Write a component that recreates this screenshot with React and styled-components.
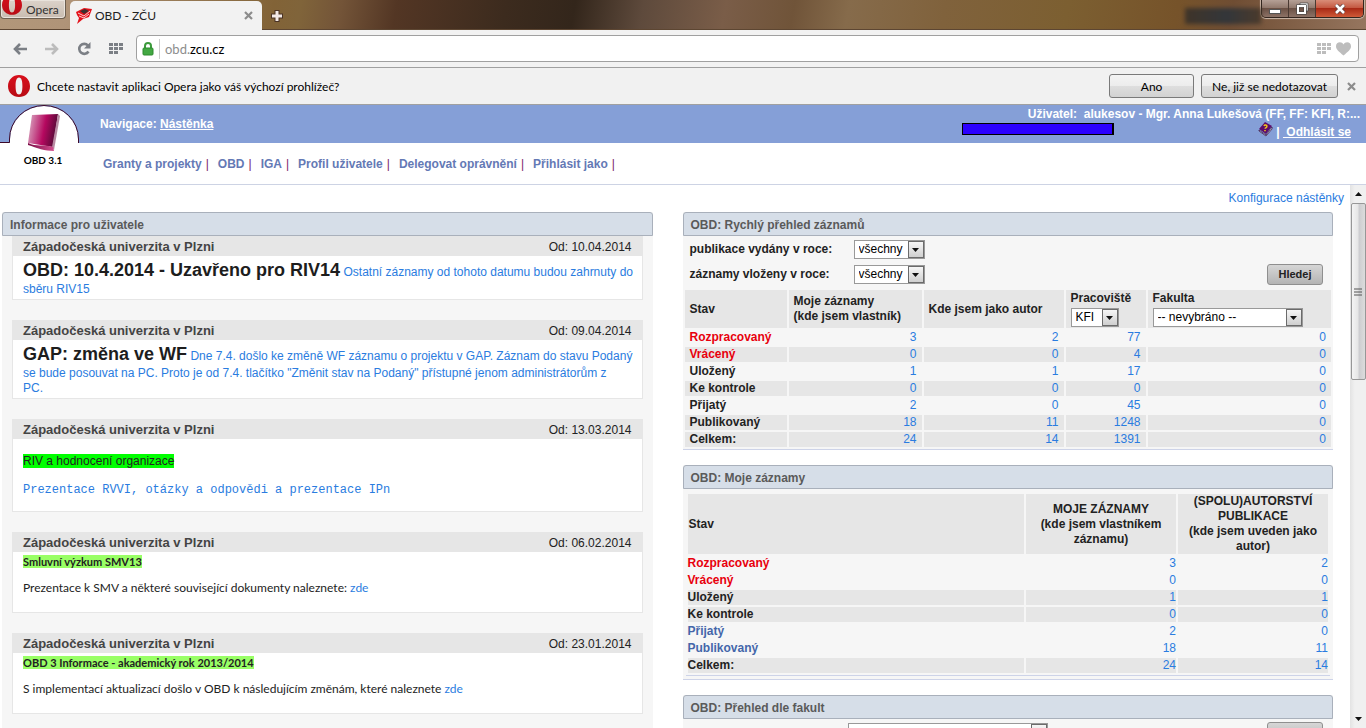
import React from "react";
import styled, { createGlobalStyle, css } from "styled-components";

const uiFont = `Lato, "Open Sans", sans-serif`;
const pageFont = `"Liberation Sans", Arial, sans-serif`;

const GlobalStyle = createGlobalStyle`
  * {
    box-sizing: border-box;
  }

  body {
    margin: 0;
    background: #fff;
    color: #222;
    font-family: ${pageFont};
    font-size: 12px;
    line-height: 15px;
  }

  button,
  select,
  input {
    font: inherit;
    color: inherit;
    margin: 0;
  }
`;

const Window = styled.div`
  height: 100vh;
  display: flex;
  flex-direction: column;
  overflow: hidden;
`;

/* ---------- browser ---------- */

const TitleBar = styled.div`
  flex: none;
  height: 30px;
  display: flex;
  align-items: flex-start;
  border-bottom: 1px solid #5d4632;
  font-family: ${uiFont};
  background: linear-gradient(
    100deg,
    #b2977a 0%,
    #b09478 5%,
    #826337 20%,
    #80643a 22%,
    #735438 25%,
    #533624 29%,
    #3c2b1e 37%,
    #33261b 42%,
    #5e4a3c 47%,
    #7a5d48 53%,
    #705439 58%,
    #866b4b 62%,
    #80623c 69%,
    #7c5f31 78%,
    #76532a 86%,
    #6f4d33 90%,
    #96765f 100%
  );
`;

const OperaMenu = styled.button`
  height: 19px;
  width: 66px;
  display: flex;
  align-items: flex-start;
  gap: 4px;
  padding: 0 0 0 1px;
  overflow: hidden;
  border: 1px solid #6d5f50;
  border-top: 0;
  border-radius: 0 0 4px 4px;
  background: linear-gradient(#dcd3ca, #c8bcb0);
  box-shadow: inset 0 0 0 1px #e9e3dc;
  color: #333;

  span {
    padding-top: 2px;
  }
`;

const Tab = styled.div`
  height: 29px;
  width: 192px;
  margin: 1px 0 0 4px;
  padding: 0 9px 0 6px;
  display: flex;
  align-items: center;
  gap: 3px;
  border-radius: 5px 5px 0 0;
  background: #f2f2f2;
  color: #222;

  span {
    flex: 1;
  }
`;

const BareButton = styled.button`
  display: flex;
  align-items: center;
  justify-content: center;
  padding: 0;
  border: 0;
  background: none;
`;

const NewTab = styled(BareButton)`
  margin: 10px auto 0 9px;
`;

/* strip of the desktop that shows through the glass frame */
const Shade = styled.div`
  width: 76px;
  height: 16px;
  margin-top: 8px;
  background: linear-gradient(90deg, #3f3429, #33363a 55%, #4a3a2c);
  filter: blur(2px);
`;

const WindowButtons = styled.div`
  display: flex;
  margin-right: 2px;
  height: 18px;
  border: 1px solid #33261f;
  border-top: 0;
  border-radius: 0 0 5px 5px;
  overflow: hidden;
  box-shadow: 0 0 1px 1px #cdb9aa;
`;

const WindowButton = styled.button`
  width: ${p => (p.$close ? 47 : 27)}px;
  display: flex;
  align-items: center;
  justify-content: center;
  padding: 0;
  border: 0;
  border-right: ${p => (p.$close ? "0" : "1px solid #4a3a32")};
  background: ${p =>
    p.$close
      ? "linear-gradient(#d98d78, #c45942 45%, #a92a16 50%, #cf5a38)"
      : "linear-gradient(#b5a096, #927a6e 45%, #6b5145 50%, #8c7266)"};
`;

const Toolbar = styled.div`
  flex: none;
  height: 38px;
  display: flex;
  align-items: center;
  gap: 8px;
  padding: 0 7px 0 8px;
  background: #f2f2f2;
  border-bottom: 1px solid #a0a0a0;
`;

const ToolButton = styled(BareButton)`
  width: 24px;
  height: 24px;
`;

const AddressBar = styled.div`
  flex: 1;
  height: 27px;
  display: flex;
  align-items: center;
  padding: 0 7px 0 5px;
  border: 1px solid #a0a0a0;
  border-radius: 4px;
  background: #fff;
  font: 13px/20px ${uiFont};
`;

const Host = styled.span`
  flex: 1;
  margin-left: 5px;
  padding-left: 5px;
  border-left: 1px solid #ccc;
  color: #000;

  i {
    font-style: normal;
    color: #8d8d8d;
  }
`;

const InfoBar = styled.div`
  flex: none;
  height: 37px;
  display: flex;
  align-items: center;
  gap: 7px;
  padding: 0 10px 0 8px;
  background: #f1f1f1;
  border-bottom: 1px solid #a0a0a0;
  font-family: ${uiFont};
  color: #000;

  p {
    flex: 1;
    margin: 0;
  }
`;

const InfoButton = styled.button`
  height: 24px;
  min-width: 85px;
  padding: 0 10px;
  border: 1px solid #7a7a7a;
  border-radius: 3px;
  background: linear-gradient(#f4f4f4, #ececec 50%, #dedede 50%, #d2d2d2);
  color: #000;
`;

const CloseInfo = styled(BareButton)`
  margin-left: 2px;
`;

/* ---------- page header ---------- */

const Header = styled.header`
  flex: none;
  display: grid;
  grid-template-columns: 100px 1fr;
  grid-template-rows: 38px 41px;
  border-bottom: 1px solid #cdd3e4;
`;

const LogoArea = styled.div`
  grid-column: 1;
  grid-row: 1 / 3;
  z-index: 1;
`;

const TopStrip = styled.div`
  grid-column: 1 / 3;
  grid-row: 1;
  display: flex;
  justify-content: space-between;
  padding: 2px 6px 0 100px;
  background: #859fd7;
  color: #fff;
  font-weight: bold;

  a {
    color: #fff;
  }
`;

const Path = styled.div`
  padding-top: 10px;
`;

const User = styled.div`
  width: 398px;
`;

const UserName = styled.div`
  text-align: right;
  white-space: pre;
`;

const UserTools = styled.div`
  display: flex;
  align-items: flex-start;
  gap: 3px;
  padding-right: 9px;

  span {
    padding-top: 3px;
    white-space: pre;
  }
`;

const Masked = styled.div`
  width: 152px;
  height: 12px;
  margin: 1px auto 0 0;
  border: 1px solid #000;
  border-right-width: 2px;
  background: #2b00ff;
`;

const Menu = styled.nav`
  grid-column: 2;
  grid-row: 2;
  display: flex;
  padding: 14px 0 0 3px;
  font-weight: bold;

  a {
    color: #6479b5;
    text-decoration: none;
  }

  a::after {
    content: "|";
    margin: 0 9px 0 4px;
    color: #7a1a6e;
    font-weight: normal;
  }
`;

/* ---------- dashboard ---------- */

const Viewport = styled.div`
  flex: 1;
  min-height: 0;
  display: flex;
`;

const Dashboard = styled.main`
  flex: 1;
  min-width: 0;
  overflow: hidden;
  padding: 6px 17px 0 2px;
`;

const Config = styled.div`
  margin: 0 -11px 6px 0;
  text-align: right;
`;

const Link = styled.a`
  color: #2a7ce0;
  text-decoration: none;
`;

const Columns = styled.div`
  display: grid;
  grid-template-columns: 1fr 1fr;
  gap: 30px;
  align-items: start;
`;

const Panel = styled.section`
  background: #f6f6f6;
  margin-bottom: 15px;
`;

const PanelTitle = styled.h2`
  margin: 0;
  height: 24px;
  padding: 5px 7px 0;
  border: 1px solid #a9b0bb;
  border-radius: 3px 3px 0 0;
  background: #d6dee8;
  color: #5a5a5a;
  font-size: 12px;
  line-height: 15px;
`;

const Notices = styled.div`
  display: grid;
  gap: 20px;
  padding: 0 10px 20px;
`;

const NoticeHead = styled.header`
  display: flex;
  justify-content: space-between;
  height: 20px;
  padding: 3px 11px 0;
  background: #e6e6e6;

  h3 {
    margin: 0;
    color: #444;
    font-size: 13px;
    line-height: 16px;
  }

  time {
    line-height: 17px;
  }
`;

const NoticeBody = styled.div`
  padding: ${p => p.$pad || "3px 3px 2px 10px"};
  border: 1px solid #e6e6e6;
  border-top: 0;
  background: #fff;

  p {
    margin: 0 0 ${p => p.$gap || 0}px;
  }

  p:last-child {
    margin: 0;
  }
`;

const Headline = styled.b`
  color: #1d1d1d;
  font-size: 18px;
  line-height: 23px;
`;

const Mark = styled.mark`
  background: ${p => p.$color};
  color: #222;
`;

const Small = styled.div`
  font-family: ${uiFont};

  mark {
    font-size: 11px;
    font-weight: bold;
  }
`;

const Mono = styled.p`
  font-family: "Liberation Mono", monospace;
`;

const Filters = styled.div`
  display: grid;
  grid-template-columns: 164px 1fr auto;
  row-gap: 5px;
  align-items: center;
  padding: 4px 10px 3px 7px;

  label {
    font-weight: bold;
  }
`;

const SearchButton = styled.button`
  grid-column: 3;
  height: 21px;
  width: 56px;
  padding: 0;
  border: 1px solid #8f8f8f;
  border-radius: 3px;
  background: linear-gradient(#d6d6d6, #b4b4b4);
  font-size: 11px;
  font-weight: bold;
`;

const SelectBox = styled.span`
  display: inline-grid;
  grid-template-columns: 1fr 16px;
  vertical-align: top;
  width: ${p => p.$width}px;
  height: 19px;
  border: 1px solid #999;
  background: #fff;

  select {
    grid-area: 1 / 1 / 2 / 3;
    appearance: none;
    width: 100%;
    height: 17px;
    padding: 0 0 0 4px;
    border: 0;
    border-radius: 0;
    background: none;
    color: #000;
    font-size: 12px;
    font-weight: normal;
    line-height: 17px;
  }
`;

const Arrow = styled.span`
  grid-area: 1 / 2;
  pointer-events: none;
  display: flex;
  align-items: center;
  justify-content: center;
  border: 1px solid #6b6b6b;
  background: linear-gradient(#f6f6f6, #cfcfcf);
`;

const Table = styled.table`
  width: 100%;
  table-layout: fixed;
  border-collapse: separate;
  border-spacing: 2px;
  border-bottom: 1px solid #cdd3e8;

  th,
  td {
    height: 15px;
    padding: 0 ${p => p.$pad}px;
    line-height: 15px;
    text-align: right;
  }

  tbody th {
    text-align: left;
  }
`;

const Col = styled.col`
  width: ${p => p.$width}px;
`;

const HeadCell = styled.th`
  && {
    height: ${p => p.$height}px;
    padding: 0 ${p => p.$pad}px;
    background: #e6e6e6;
    text-align: ${p => p.$align || "left"};
  }
`;

const FieldLabel = styled.label`
  display: block;
  margin-bottom: 2px;
`;

const Row = styled.tr`
  ${p =>
    p.$dark &&
    css`
      th,
      td {
        background: #e6e6e6;
      }
    `}

  th {
    color: ${p => p.$color || "#222"};
  }
`;

const TableInset = styled.div`
  padding: 3px;
  border-bottom: 1px solid #cdd3e8;
`;

const FacultyFilters = styled(Filters)`
  grid-template-columns: 158px 1fr auto;
  padding-top: 3px;
`;

/* ---------- scrollbar ---------- */

const Scrollbar = styled.div`
  flex: none;
  width: 16px;
  display: flex;
  flex-direction: column;
  align-items: center;
  background: linear-gradient(90deg, #e3e3e3, #f0f0f0 30%, #f0f0f0);
`;

const ScrollArrow = styled(BareButton)`
  height: 18px;
  width: 16px;
`;

const Thumb = styled.div`
  width: 15px;
  height: 177px;
  display: flex;
  align-items: center;
  justify-content: center;
  border: 1px solid #979797;
  border-radius: 2px;
  background: linear-gradient(90deg, #f4f4f4, #e6e6e6 45%, #cdcdd0 55%, #dcdcdc);
`;

const Track = styled.div`
  flex: 1;
`;

/* ---------- drawings ---------- */

const OperaO = ({ size, id, cut = 0 }) => (
  <svg
    width={size}
    height={Math.round((size * (22 - cut)) / 22)}
    viewBox={`0 ${cut} 22 ${22 - cut}`}
  >
    <defs>
      <linearGradient id={id} x1="0" y1="0" x2="0" y2="1">
        <stop offset="0" stopColor="#d8101c" />
        <stop offset="1" stopColor="#b80c14" />
      </linearGradient>
    </defs>
    <path
      fill={`url(#${id})`}
      fillRule="evenodd"
      d="M11 0C17 0 22 4.5 22 11.200S17 22 11 22 0 17.700 0 11.200 5 0 11 0zM11 2.500C8.500 2.500 7.600 6 7.600 11s.9 8.500 3.400 8.500 3.400-3.500 3.400-8.500-.9-8.500-3.400-8.500z"
    />
  </svg>
);

const Cross = ({ color = "#8c8c8c" }) => (
  <svg width="9" height="9" viewBox="0 0 9 9">
    <path d="M1 1l7 7M8 1L1 8" stroke={color} strokeWidth="2.200" />
  </svg>
);

const Favicon = () => (
  <svg width="16" height="16" viewBox="0 0 16 16">
    <path d="M0 4l8-4 8 1-3 8-6 2-6 5 2-6-2-3z" fill="#e5121b" />
    <path d="M4 3l5-2 4 2-5 3z" fill="#3d3030" />
    <path d="M2 5l6 3 6-5M3 8l5 2 5-4" fill="none" stroke="#fff" strokeWidth="0.800" />
  </svg>
);

const BackArrow = ({ color, flip }) => (
  <svg width="14" height="12" viewBox="0 0 14 12">
    <path
      transform={flip ? "matrix(-1 0 0 1 14 0)" : undefined}
      d="M14 6H2M7 1L2 6l5 5"
      fill="none"
      stroke={color}
      strokeWidth="2.600"
    />
  </svg>
);

const Reload = () => (
  <svg width="14" height="14" viewBox="0 0 14 14">
    <path d="M11.500 9.500A5 5 0 1 1 11 3.500" fill="none" stroke="#7b7f85" strokeWidth="2.600" />
    <path d="M13.500 0v6.500H7z" fill="#7b7f85" />
  </svg>
);

const Tiles = ({ color }) => (
  <svg width="15" height="12" viewBox="0 0 15 12" fill={color}>
    {[0, 4, 8].map(y =>
      [0, 5, 10].map(x =>
        x === 10 && y === 8 ? null : (
          <rect key={`${x}-${y}`} x={x} y={y} width="4" height="3" />
        )
      )
    )}
  </svg>
);

const Lock = () => (
  <svg width="12" height="14" viewBox="0 0 12 14">
    <path d="M3 7V4a3 3 0 0 1 6 0v3" fill="none" stroke="#3c9a3c" strokeWidth="2" />
    <rect x="1" y="6" width="10" height="7" rx="1" fill="#43a843" stroke="#2f8a2f" />
  </svg>
);

const Heart = () => (
  <svg width="15" height="14" viewBox="0 0 15 14">
    <path
      d="M7.500 13.500C3 9.500 0 7.500 0 4.200 0 1.800 1.700.3 3.900.3c1.500 0 2.800.8 3.600 2.100C8.300 1.100 9.600.3 11.100.3c2.200 0 3.900 1.500 3.900 3.900 0 3.300-3 5.300-7.500 9.300z"
      fill="#bdbdbd"
    />
  </svg>
);

const Book = () => (
  <svg width="15" height="15" viewBox="0 0 15 15">
    <path d="M7 0l7 4-6 8-7-5z" fill="#5d0d6b" />
    <path d="M1 8l7 5 6-8v2l-6 7-7-5z" fill="#fff" stroke="#2c0638" strokeWidth="0.700" />
    <path
      d="M6 4c.6-1.500 3.200-1.100 2.900.6-.2 1-1.700.9-1.800 2.200M7 8v1.300"
      fill="none"
      stroke="#f5c71a"
      strokeWidth="1.500"
    />
  </svg>
);

const Down = ({ up }) => (
  <svg width="7" height="4" viewBox="0 0 7 4">
    <path d={up ? "M0 4h7L3.500 0z" : "M0 0h7L3.500 4z"} fill="#111" />
  </svg>
);

const Logo = () => (
  <svg width="84" height="64" viewBox="0 0 84 64" role="img" aria-label="OBD 3.1">
    <defs>
      <linearGradient id="cover" x1="0" y1="0.300" x2="1" y2="0.500">
        <stop offset="0" stopColor="#d9a3bf" />
        <stop offset="0.550" stopColor="#b5085f" />
        <stop offset="1" stopColor="#4c0b33" />
      </linearGradient>
      <linearGradient id="pages" x1="0" y1="0" x2="1" y2="0">
        <stop offset="0" stopColor="#7a0c45" />
        <stop offset="1" stopColor="#d34c8e" />
      </linearGradient>
    </defs>
    <path d="M10 38V34A34 33 0 0 1 78 34V38V62H10z" fill="#fff" />
    <path d="M0 37.500H9.500V34A34.500 33.500 0 0 1 78.500 34V38" fill="none" stroke="#3d0828" />
    <path d="M32 10l26-1-5 33-25-4z" fill="url(#cover)" />
    <path d="M58 9l2 2-6 34-2-3z" fill="#b98aa2" />
    <path d="M28 38c8 4 17 1 25 4l1 4c-9 0-17-3-26-6z" fill="url(#pages)" />
    <text
      x="43"
      y="59"
      textAnchor="middle"
      fontFamily="Lato, sans-serif"
      fontSize="10"
      fontWeight="bold"
      fill="#000"
    >
      OBD 3.1
    </text>
  </svg>
);

/* ---------- parts ---------- */

function Select({ id, width, value, label }) {
  return (
    <SelectBox $width={width}>
      <select id={id} aria-label={label} defaultValue={value}>
        <option>{value}</option>
      </select>
      <Arrow>
        <Down />
      </Arrow>
    </SelectBox>
  );
}

function Notice({ date, pad, gap, children }) {
  return (
    <article>
      <NoticeHead>
        <h3>Západočeská univerzita v Plzni</h3>
        <time>Od: {date}</time>
      </NoticeHead>
      <NoticeBody $pad={pad} $gap={gap}>
        {children}
      </NoticeBody>
    </article>
  );
}

function DataRows({ rows }) {
  return (
    <tbody>
      {rows.map(row => (
        <Row key={row.name} $dark={row.dark} $color={row.color}>
          <th scope="row">{row.name}</th>
          {row.values.map((value, i) => (
            <td key={i}>
              <Link href="#">{value}</Link>
            </td>
          ))}
        </Row>
      ))}
    </tbody>
  );
}

const menuItems = [
  "Granty a projekty",
  "OBD",
  "IGA",
  "Profil uživatele",
  "Delegovat oprávnění",
  "Přihlásit jako"
];

const overviewRows = [
  { name: "Rozpracovaný", values: [3, 2, 77, 0], color: "#e8000d" },
  { name: "Vrácený", values: [0, 0, 4, 0], color: "#e8000d", dark: true },
  { name: "Uložený", values: [1, 1, 17, 0] },
  { name: "Ke kontrole", values: [0, 0, 0, 0], dark: true },
  { name: "Přijatý", values: [2, 0, 45, 0] },
  { name: "Publikovaný", values: [18, 11, 1248, 0], dark: true },
  { name: "Celkem:", values: [24, 14, 1391, 0], dark: true }
];

const myRows = [
  { name: "Rozpracovaný", values: [3, 2], color: "#e8000d" },
  { name: "Vrácený", values: [0, 0], color: "#e8000d" },
  { name: "Uložený", values: [1, 1], dark: true },
  { name: "Ke kontrole", values: [0, 0], dark: true },
  { name: "Přijatý", values: [2, 0], color: "#4466aa" },
  { name: "Publikovaný", values: [18, 11], color: "#4466aa" },
  { name: "Celkem:", values: [24, 14], dark: true }
];

function Browser() {
  return (
    <React.Fragment>
      <TitleBar>
        <OperaMenu>
          <OperaO size={20} id="opera-small" cut={6} />
          <span>Opera</span>
        </OperaMenu>
        <Tab>
          <Favicon />
          <span>OBD - ZČU</span>
          <BareButton aria-label="Zavřít panel">
            <Cross />
          </BareButton>
        </Tab>
        <NewTab aria-label="Nový panel">
          <svg width="12" height="12" viewBox="0 0 12 12">
            <path d="M6 0v12M0 6h12" stroke="#4a3325" strokeWidth="5" />
            <path d="M6 1v10M1 6h10" stroke="#f3e9e6" strokeWidth="3" />
          </svg>
        </NewTab>
        <Shade />
        <WindowButtons>
          <WindowButton aria-label="Minimalizovat">
            <svg width="12" height="12" viewBox="0 0 12 12">
              <rect x="0.500" y="6.500" width="11" height="4" fill="#fff" stroke="#555" />
            </svg>
          </WindowButton>
          <WindowButton aria-label="Obnovit">
            <svg width="13" height="13" viewBox="0 0 13 13" fill="none">
              <path d="M4 1h8v8h-2V3H4z" fill="#fff" stroke="#444" strokeWidth="0.700" />
              <rect x="2" y="4" width="7" height="7" stroke="#444" strokeWidth="3.200" />
              <rect x="2" y="4" width="7" height="7" stroke="#fff" strokeWidth="2" />
            </svg>
          </WindowButton>
          <WindowButton $close aria-label="Zavřít">
            <svg width="12" height="10" viewBox="0 0 12 10">
              <path d="M2 1l8 8M10 1L2 9" stroke="#5c3a3a" strokeWidth="4.200" />
              <path d="M2 1l8 8M10 1L2 9" stroke="#fff" strokeWidth="2.600" />
            </svg>
          </WindowButton>
        </WindowButtons>
      </TitleBar>
      <Toolbar>
        <ToolButton aria-label="Zpět">
          <BackArrow color="#7b7f85" />
        </ToolButton>
        <ToolButton aria-label="Vpřed">
          <BackArrow color="#bcbcbc" flip />
        </ToolButton>
        <ToolButton aria-label="Načíst znovu">
          <Reload />
        </ToolButton>
        <ToolButton aria-label="Rychlá volba">
          <Tiles color="#7b7f85" />
        </ToolButton>
        <AddressBar>
          <Lock />
          <Host>
            <i>obd.</i>zcu.cz
          </Host>
          <ToolButton aria-label="Přidat na Rychlou volbu">
            <Tiles color="#bdbdbd" />
          </ToolButton>
          <BareButton aria-label="Přidat do záložek">
            <Heart />
          </BareButton>
        </AddressBar>
      </Toolbar>
      <InfoBar>
        <OperaO size={22} id="opera-large" />
        <p>Chcete nastavit aplikaci Opera jako váš výchozí prohlížeč?</p>
        <InfoButton>Ano</InfoButton>
        <InfoButton>Ne, již se nedotazovat</InfoButton>
        <CloseInfo aria-label="Zavřít">
          <Cross />
        </CloseInfo>
      </InfoBar>
    </React.Fragment>
  );
}

function PageHeader() {
  return (
    <Header>
      <LogoArea>
        <Logo />
      </LogoArea>
      <TopStrip>
        <Path>
          Navigace: <a href="#">Nástěnka</a>
        </Path>
        <User>
          <UserName>
            {"Uživatel:  alukesov - Mgr. Anna Lukešová (FF, FF: KFI, R:..."}
          </UserName>
          <UserTools>
            <Masked />
            <Book />
            <span>
              | <a href="#">{" Odhlásit se"}</a>
            </span>
          </UserTools>
        </User>
      </TopStrip>
      <Menu>
        {menuItems.map(item => (
          <a key={item} href="#">
            {item}
          </a>
        ))}
      </Menu>
    </Header>
  );
}

function InfoPanel() {
  return (
    <Panel>
      <PanelTitle>Informace pro uživatele</PanelTitle>
      <Notices>
        <Notice date="10.04.2014">
          <Headline>OBD: 10.4.2014 - Uzavřeno pro RIV14</Headline>{" "}
          <Link href="#">
            Ostatní záznamy od tohoto datumu budou zahrnuty do sběru RIV15
          </Link>
        </Notice>
        <Notice date="09.04.2014">
          <Headline>GAP: změna ve WF</Headline>{" "}
          <Link href="#">
            Dne 7.4. došlo ke změně WF záznamu o projektu v GAP. Záznam do stavu
            Podaný se bude posouvat na PC. Proto je od 7.4. tlačítko "Změnit
            stav na Podaný" přístupné jenom administrátorům z<br />
            PC.
          </Link>
        </Notice>
        <Notice date="13.03.2014" pad="15px 3px 13px 10px" gap={14}>
          <p>
            <Mark $color="#00ff00">RIV a hodnocení organizace</Mark>
          </p>
          <Mono>
            <Link href="#">
              Prezentace RVVI, otázky a odpovědi a prezentace IPn
            </Link>
          </Mono>
        </Notice>
        <Notice date="06.02.2014" pad="2px 3px 17px 10px" gap={11}>
          <Small>
            <p>
              <Mark $color="#99ff66">Smluvní výzkum SMV13</Mark>
            </p>
            <p>
              Prezentace k SMV a některé související dokumenty naleznete:{" "}
              <Link href="#">zde</Link>
            </p>
          </Small>
        </Notice>
        <Notice date="23.01.2014" pad="2px 3px 17px 10px" gap={11}>
          <Small>
            <p>
              <Mark $color="#99ff66">
                OBD 3 Informace - akademický rok 2013/2014
              </Mark>
            </p>
            <p>
              S implementací aktualizací došlo v OBD k následujícím změnám, které
              naleznete <Link href="#">zde</Link>
            </p>
          </Small>
        </Notice>
      </Notices>
    </Panel>
  );
}

function OverviewPanel() {
  return (
    <Panel>
      <PanelTitle>OBD: Rychlý přehled záznamů</PanelTitle>
      <Filters>
        <label htmlFor="published">publikace vydány v roce:</label>
        <Select id="published" width={71} value="všechny" />
        <span />
        <label htmlFor="inserted">záznamy vloženy v roce:</label>
        <Select id="inserted" width={71} value="všechny" />
        <SearchButton>Hledej</SearchButton>
      </Filters>
      <Table $pad={5}>
        <colgroup>
          <Col $width={102} />
          <Col $width={133} />
          <Col $width={140} />
          <Col $width={80} />
          <col />
        </colgroup>
        <thead>
          <tr>
            <HeadCell $height={38} $pad={5}>
              Stav
            </HeadCell>
            <HeadCell $height={38} $pad={5}>
              Moje záznamy
              <br />
              (kde jsem vlastník)
            </HeadCell>
            <HeadCell $height={38} $pad={5}>
              Kde jsem jako autor
            </HeadCell>
            <HeadCell $height={38} $pad={5}>
              <FieldLabel htmlFor="department">Pracoviště</FieldLabel>
              <Select id="department" width={48} value="KFI" />
            </HeadCell>
            <HeadCell $height={38} $pad={5}>
              <FieldLabel htmlFor="faculty">Fakulta</FieldLabel>
              <Select id="faculty" width={150} value="-- nevybráno --" />
            </HeadCell>
          </tr>
        </thead>
        <DataRows rows={overviewRows} />
      </Table>
    </Panel>
  );
}

function MyRecordsPanel() {
  return (
    <Panel>
      <PanelTitle>OBD: Moje záznamy</PanelTitle>
      <TableInset>
        <Table $pad={0}>
          <colgroup>
            <col />
            <Col $width={150} />
            <Col $width={150} />
          </colgroup>
          <thead>
            <tr>
              <HeadCell $height={60} $pad={1}>
                Stav
              </HeadCell>
              <HeadCell $height={60} $pad={1} $align="center">
                MOJE ZÁZNAMY
                <br />
                (kde jsem vlastníkem záznamu)
              </HeadCell>
              <HeadCell $height={60} $pad={1} $align="center">
                (SPOLU)AUTORSTVÍ PUBLIKACE
                <br />
                (kde jsem uveden jako autor)
              </HeadCell>
            </tr>
          </thead>
          <DataRows rows={myRows} />
        </Table>
      </TableInset>
    </Panel>
  );
}

function FacultyPanel() {
  return (
    <Panel>
      <PanelTitle>OBD: Přehled dle fakult</PanelTitle>
      <FacultyFilters>
        <span />
        <Select label="Fakulta" width={200} value="" />
        <SearchButton>Hledej</SearchButton>
      </FacultyFilters>
    </Panel>
  );
}

export default function App() {
  return (
    <Window>
      <GlobalStyle />
      <Browser />
      <PageHeader />
      <Viewport>
        <Dashboard>
          <Config>
            <Link href="#">Konfigurace nástěnky</Link>
          </Config>
          <Columns>
            <InfoPanel />
            <div>
              <OverviewPanel />
              <MyRecordsPanel />
              <FacultyPanel />
            </div>
          </Columns>
        </Dashboard>
        <Scrollbar>
          <ScrollArrow aria-label="Nahoru">
            <Down up />
          </ScrollArrow>
          <Thumb>
            <svg width="8" height="8" viewBox="0 0 8 8">
              <path d="M0 1h8M0 4h8M0 7h8" stroke="#555" />
            </svg>
          </Thumb>
          <Track />
          <ScrollArrow aria-label="Dolů">
            <Down />
          </ScrollArrow>
        </Scrollbar>
      </Viewport>
    </Window>
  );
}
